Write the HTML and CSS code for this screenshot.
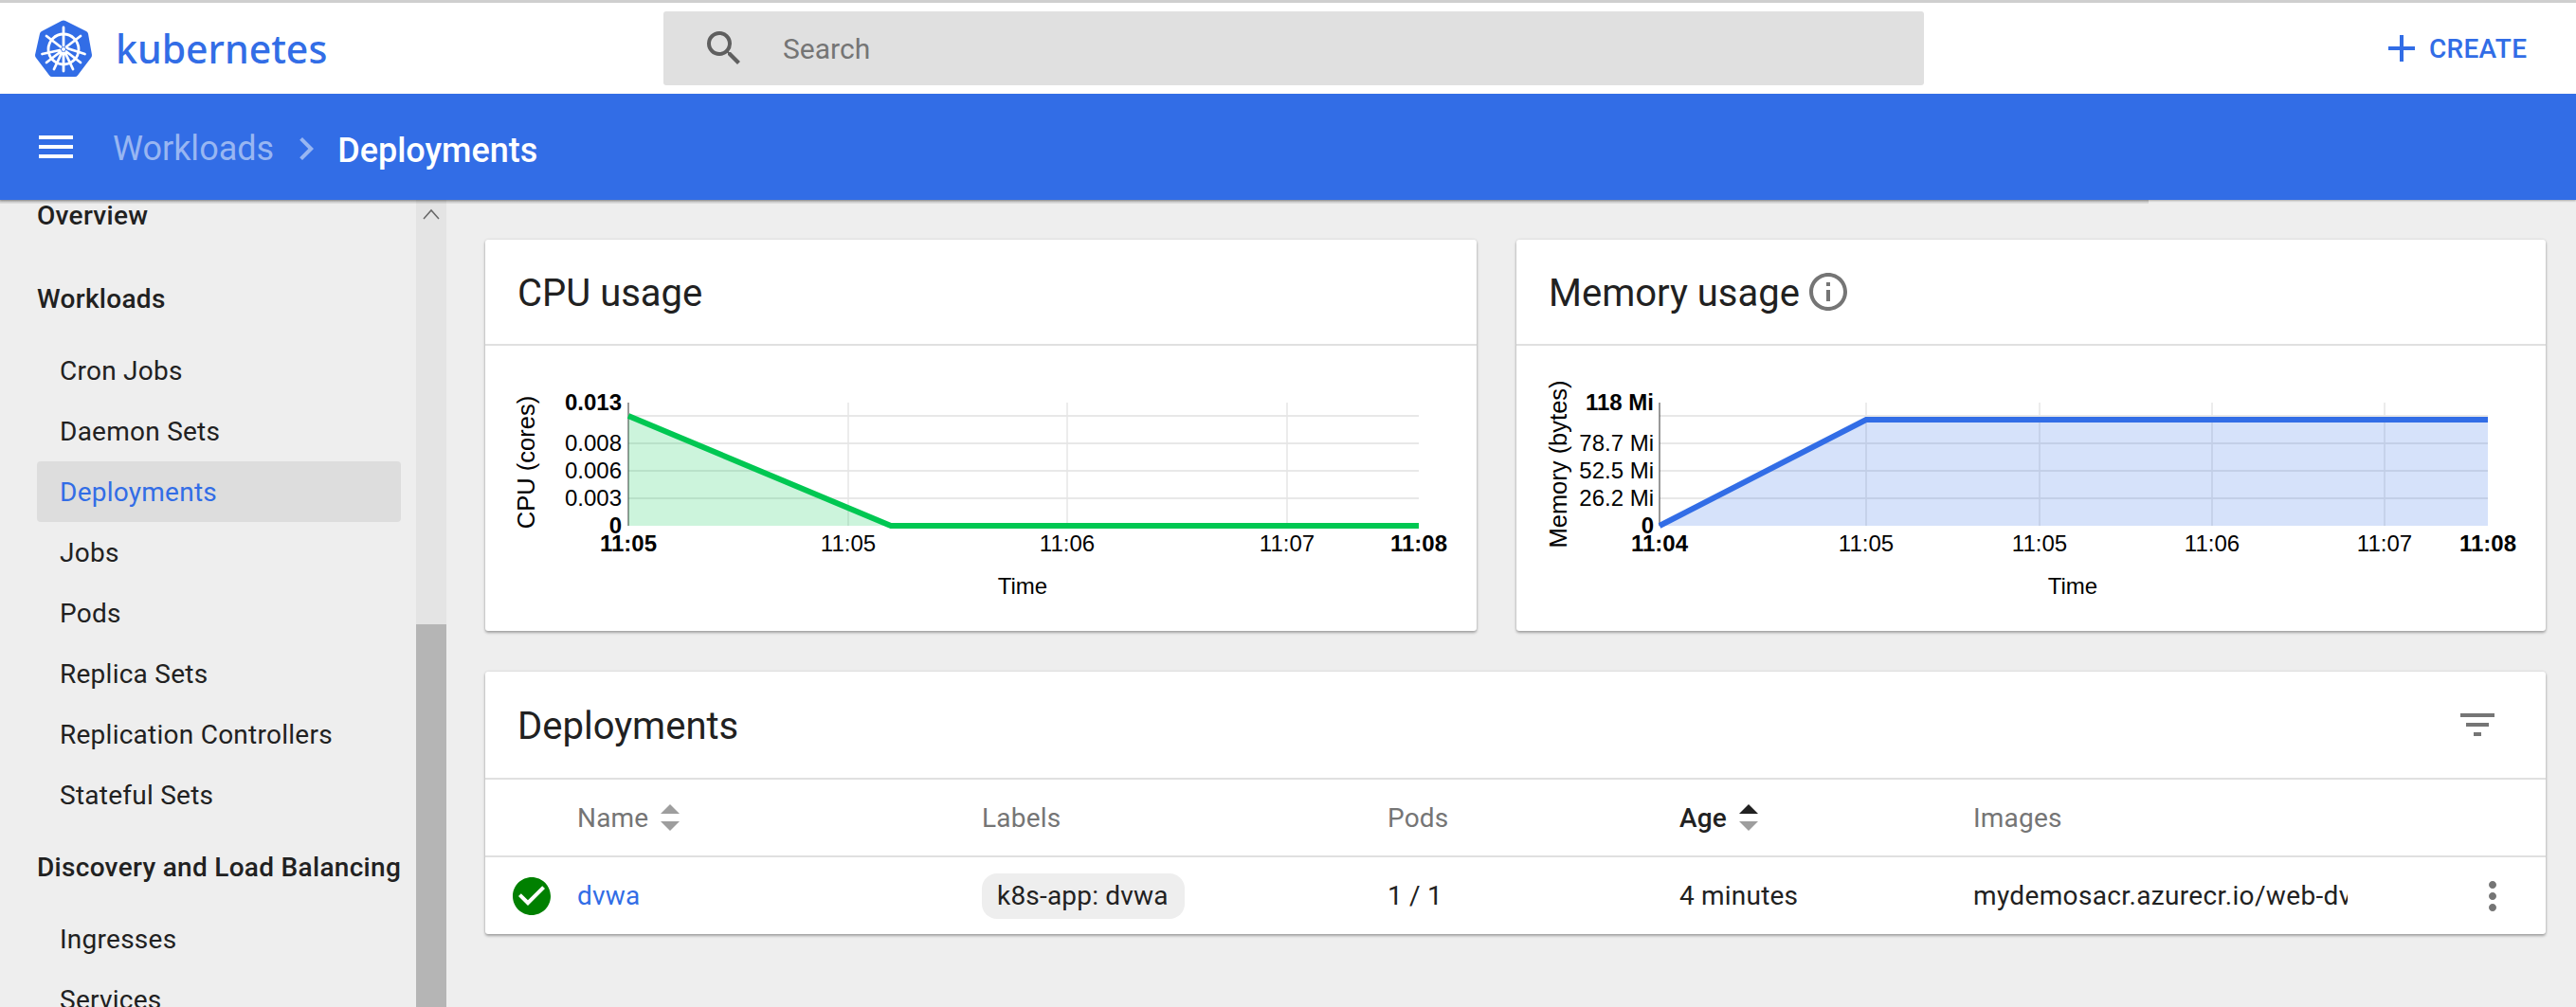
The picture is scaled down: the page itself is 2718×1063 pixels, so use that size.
FILE: index.html
```html
<!DOCTYPE html>
<html>
<head>
  <title>Deployments - Kubernetes Dashboard</title>
  <link rel="stylesheet" href="styles.css">
</head>
<body>
  <header class="top-bar">
    <div class="brand">
      <svg class="brand-logo" viewBox="0 0 60 60">
        <path class="logo-hept" d="M30 0.5 Q31 0.5 32 1 L54 12 Q55.500 12.800 56 14.500 L60 37 Q60 39 59 40 L45 58.500 Q44 60 42 60 L18 60 Q16 60 15 58.500 L1 40 Q0 39 0 37 L5 14.500 Q5.500 12.800 7 12 L28 1 Q29 0.500 30 0.500 Z"/>
        <g class="logo-wheel">
          <circle cx="30" cy="31" r="16"/>
          <circle cx="30" cy="31" r="2" class="logo-hub"/>
          <path d="M30 8 V27 M30 35 V54 M48 17 L33 28.500 M27 33.500 L12 45 M12 17 L27 28.500 M33 33.500 L48 45 M7.500 36 L26 32 M34 30 L52.500 36 M20 52 L28 35 M40 52 L32 35"/>
        </g>
      </svg>
      <span class="brand-name">kubernetes</span>
    </div>
    <div class="search-box">
      <svg class="icon search-icon" viewBox="0 0 24 24"><path d="M15.500 14h-.79l-.28-.27A6.471 6.471 0 0 0 16 9.500 6.500 6.500 0 1 0 9.500 16c1.610 0 3.090-.59 4.230-1.570l.27.28v.79l5 4.990L20.490 19l-4.990-5zm-6 0C7.010 14 5 11.990 5 9.500S7.010 5 9.500 5 14 7.010 14 9.500 11.990 14 9.500 14z"/></svg>
      <span class="search-text">Search</span>
    </div>
    <div class="create-btn">
      <svg class="icon" viewBox="0 0 24 24"><path d="M19 13h-6v6h-2v-6H5v-2h6V5h2v6h6v2z"/></svg>
      <span>CREATE</span>
    </div>
  </header>

  <div class="crumb-bar">
    <svg class="icon menu-icon" viewBox="0 0 24 24"><path d="M3 18h18v-2H3v2zm0-5h18v-2H3v2zm0-7v2h18V6H3z"/></svg>
    <span class="crumb-link">Workloads</span>
    <svg class="icon crumb-sep" viewBox="0 0 24 24"><path d="M10 6L8.590 7.410 13.170 12l-4.580 4.590L10 18l6-6z"/></svg>
    <span class="crumb-current">Deployments</span>
  </div>

  <div class="layout">
    <aside class="sidebar">
      <nav class="side-nav">
        <div class="nav-head">Overview</div>
        <div class="nav-head nav-group">Workloads</div>
        <div class="nav-list">
          <div class="nav-item">Cron Jobs</div>
          <div class="nav-item">Daemon Sets</div>
          <div class="nav-item selected">Deployments</div>
          <div class="nav-item">Jobs</div>
          <div class="nav-item">Pods</div>
          <div class="nav-item">Replica Sets</div>
          <div class="nav-item">Replication Controllers</div>
          <div class="nav-item">Stateful Sets</div>
        </div>
        <div class="nav-head nav-group-tight">Discovery and Load Balancing</div>
        <div class="nav-list">
          <div class="nav-item">Ingresses</div>
          <div class="nav-item">Services</div>
        </div>
      </nav>
      <div class="scrollbar">
        <svg class="scroll-arrow" viewBox="0 0 32 32"><path d="M8 20 L16 11 L24 20"/></svg>
        <div class="scroll-thumb"></div>
      </div>
    </aside>

    <main class="content">
      <div class="chart-row">
        <section class="card cpu-card">
          <div class="card-head"><h2>CPU usage</h2></div>
          <svg class="chart" viewBox="0 0 1046 301">
            <g class="grid-h">
              <line x1="151" x2="985" y1="74" y2="74"/>
              <line x1="151" x2="985" y1="103" y2="103"/>
              <line x1="151" x2="985" y1="132" y2="132"/>
              <line x1="151" x2="985" y1="161" y2="161"/>
            </g>
            <g class="grid-v">
              <line x1="383" x2="383" y1="60" y2="190"/>
              <line x1="614" x2="614" y1="60" y2="190"/>
              <line x1="846" x2="846" y1="60" y2="190"/>
            </g>
            <line class="axis" x1="151" x2="151" y1="60" y2="190"/>
            <path class="area-green" d="M151 74 L428 190 L151 190 Z"/>
            <path class="line-green" d="M151 74 L428 190 L985 190"/>
            <g class="tick tick-y">
              <text x="144" y="68" class="strong">0.013</text>
              <text x="144" y="111">0.008</text>
              <text x="144" y="140">0.006</text>
              <text x="144" y="169">0.003</text>
              <text x="144" y="198" class="strong">0</text>
            </g>
            <g class="tick tick-x">
              <text x="151" y="217" class="strong">11:05</text>
              <text x="383" y="217">11:05</text>
              <text x="614" y="217">11:06</text>
              <text x="846" y="217">11:07</text>
              <text x="985" y="217" class="strong">11:08</text>
            </g>
            <text class="tick tick-x" x="567" y="262">Time</text>
            <text class="axis-title" transform="translate(52 123) rotate(-90)">CPU (cores)</text>
          </svg>
        </section>

        <section class="card mem-card">
          <div class="card-head">
            <h2>Memory usage</h2>
            <svg class="icon info-icon" viewBox="0 0 24 24"><path d="M11 7h2v2h-2zm0 4h2v6h-2zm1-9C6.480 2 2 6.480 2 12s4.480 10 10 10 10-4.480 10-10S17.520 2 12 2zm0 18c-4.410 0-8-3.590-8-8s3.590-8 8-8 8 3.590 8 8-3.590 8-8 8z"/></svg>
          </div>
          <svg class="chart" viewBox="0 0 1086 301">
            <g class="grid-h">
              <line x1="151" x2="1025" y1="74" y2="74"/>
              <line x1="151" x2="1025" y1="103" y2="103"/>
              <line x1="151" x2="1025" y1="132" y2="132"/>
              <line x1="151" x2="1025" y1="161" y2="161"/>
            </g>
            <g class="grid-v">
              <line x1="369" x2="369" y1="60" y2="190"/>
              <line x1="552" x2="552" y1="60" y2="190"/>
              <line x1="734" x2="734" y1="60" y2="190"/>
              <line x1="916" x2="916" y1="60" y2="190"/>
            </g>
            <line class="axis" x1="151" x2="151" y1="60" y2="190"/>
            <path class="area-blue" d="M151 190 L369 78 L1025 78 L1025 190 Z"/>
            <path class="line-blue" d="M151 190 L369 78 L1025 78"/>
            <g class="tick tick-y">
              <text x="145" y="68" class="strong">118 Mi</text>
              <text x="145" y="111">78.7 Mi</text>
              <text x="145" y="140">52.5 Mi</text>
              <text x="145" y="169">26.2 Mi</text>
              <text x="145" y="198" class="strong">0</text>
            </g>
            <g class="tick tick-x">
              <text x="151" y="217" class="strong">11:04</text>
              <text x="369" y="217">11:05</text>
              <text x="552" y="217">11:05</text>
              <text x="734" y="217">11:06</text>
              <text x="916" y="217">11:07</text>
              <text x="1025" y="217" class="strong">11:08</text>
            </g>
            <text class="tick tick-x" x="587" y="262">Time</text>
            <text class="axis-title" transform="translate(53 125) rotate(-90)">Memory (bytes)</text>
          </svg>
        </section>
      </div>

      <section class="card table-card">
        <div class="card-head table-head">
          <h2>Deployments</h2>
          <svg class="icon filter-icon" viewBox="0 0 24 24"><path d="M10 18h4v-2h-4v2zM3 6v2h18V6H3zm3 7h12v-2H6v2z"/></svg>
        </div>
        <div class="table-row header-row">
          <div></div>
          <div class="col-title">Name
            <svg class="sort-icon" viewBox="0 0 20 28"><polygon class="sort-off" points="0,10 10,0 20,10"/><polygon class="sort-off" points="0,18 20,18 10,28"/></svg>
          </div>
          <div class="col-title">Labels</div>
          <div class="col-title">Pods</div>
          <div class="col-title active">Age
            <svg class="sort-icon" viewBox="0 0 20 28"><polygon class="sort-on" points="0,10 10,0 20,10"/><polygon class="sort-off" points="0,18 20,18 10,28"/></svg>
          </div>
          <div class="col-title">Images</div>
          <div></div>
        </div>
        <div class="table-row data-row">
          <div class="status-cell">
            <svg class="icon ok-icon" viewBox="0 0 24 24"><path d="M12 2C6.480 2 2 6.480 2 12s4.480 10 10 10 10-4.480 10-10S17.520 2 12 2zm-2 15l-5-5 1.410-1.410L10 14.170l7.590-7.590L19 8l-9 9z"/></svg>
          </div>
          <div><a class="name-link">dvwa</a></div>
          <div><span class="chip">k8s-app: dvwa</span></div>
          <div>1 / 1</div>
          <div>4 minutes</div>
          <div class="image-cell">mydemosacr.azurecr.io/web-dvwa:v1</div>
          <div class="action-cell">
            <svg class="icon more-icon" viewBox="0 0 24 24"><path d="M12 8c1.100 0 2-.9 2-2s-.9-2-2-2-2 .9-2 2 .9 2 2 2zm0 2c-1.100 0-2 .9-2 2s.9 2 2 2 2-.9 2-2-.9-2-2-2zm0 6c-1.100 0-2 .9-2 2s.9 2 2 2 2-.9 2-2-.9-2-2-2z"/></svg>
          </div>
        </div>
      </section>
    </main>
  </div>
</body>
</html>
```

FILE: styles.css
```css
* {
  box-sizing: border-box;
}

html,
body {
  margin: 0;
  height: 100%;
}

body {
  display: flex;
  flex-direction: column;
  overflow: hidden;
  background: #eeeeee;
  color: #212121;
  font-family: Roboto, "Liberation Sans", sans-serif;
  font-size: 28px;
}

.icon {
  width: 48px;
  height: 48px;
  flex: none;
  fill: currentColor;
}

/* Top bar */
.top-bar {
  display: flex;
  align-items: center;
  flex: none;
  height: 99px;
  border-top: 3px solid #cfcfcf;
  background: #fff;
}

.brand {
  display: flex;
  align-items: center;
  width: 700px;
  padding-left: 37px;
}

.brand-logo {
  width: 60px;
  height: 60px;
}

.logo-hept {
  fill: #326de6;
}

.logo-wheel {
  fill: none;
  stroke: #fff;
  stroke-width: 2.8;
  stroke-linecap: round;
}

.logo-hub {
  fill: #fff;
  stroke: none;
}

.brand-name {
  margin-left: 25px;
  color: #326de6;
  font-family: "Noto Sans", sans-serif;
  font-size: 41px;
  font-weight: 500;
}

.search-box {
  display: flex;
  align-items: center;
  width: 1330px;
  height: 78px;
  padding-left: 40px;
  border-radius: 3px;
  background: #e0e0e0;
}

.search-icon {
  color: #5f5f5f;
}

.search-text {
  margin-left: 38px;
  color: #757575;
  font-size: 30px;
}

.create-btn {
  display: flex;
  align-items: center;
  margin-left: 480px;
  color: #326de6;
  font-weight: 500;
  letter-spacing: 0.3px;
}

.create-btn span {
  margin-left: 5px;
}

/* Breadcrumbs */
.crumb-bar {
  display: flex;
  align-items: center;
  flex: none;
  position: relative;
  z-index: 2;
  height: 112px;
  padding-left: 35px;
  background: #326de6;
  box-shadow: 0 1px 2px rgba(0, 0, 0, 0.3);
  color: #fff;
}

/* darker part of the shadow, stops short of the right edge */
.crumb-bar::after {
  content: "";
  position: absolute;
  top: 100%;
  left: 0;
  width: 2267px;
  height: 4px;
  background: linear-gradient(rgba(0, 0, 0, 0.2), rgba(0, 0, 0, 0.06));
}

.crumb-link {
  margin-left: 36px;
  margin-top: 3px;
  color: #98b6f2;
  font-size: 36px;
}

.crumb-sep {
  margin-left: 10px;
  margin-top: 4px;
  color: #98b6f2;
}

.crumb-current {
  margin-left: 9px;
  margin-top: 8px;
  font-size: 36px;
  font-weight: 500;
}

/* Sidebar */
.layout {
  display: flex;
  flex: 1;
  min-height: 0;
}

.sidebar {
  display: flex;
  flex: none;
  width: 471px;
}

.side-nav {
  width: 439px;
  margin-top: -16px;
}

.nav-head {
  display: flex;
  align-items: center;
  height: 64px;
  padding-left: 39px;
  font-weight: 500;
  letter-spacing: 0.3px;
  white-space: nowrap;
}

.nav-group {
  margin-top: 24px;
}

.nav-group-tight {
  margin-top: 12px;
}

.nav-list {
  margin-top: 12px;
}

.nav-item {
  display: flex;
  align-items: center;
  width: 384px;
  height: 64px;
  margin-left: 39px;
  padding-left: 24px;
  border-radius: 4px;
  letter-spacing: 0.25px;
}

.nav-item.selected {
  background: #dddddd;
  color: #326de6;
}

.scrollbar {
  display: flex;
  flex-direction: column;
  width: 32px;
  background: #e4e4e4;
}

.scroll-arrow {
  flex: none;
  width: 32px;
  height: 32px;
  fill: none;
  stroke: #666;
  stroke-width: 1.500;
}

.scroll-thumb {
  flex: 1;
  margin-top: 416px;
  background: #b5b5b5;
}

/* Main */
.content {
  flex: 1;
  min-width: 0;
  padding: 42px 32px 0 41px;
}

.chart-row {
  display: grid;
  grid-template-columns: 1046px 1086px;
  gap: 42px;
  margin-bottom: 43px;
}

.card {
  border-radius: 3px;
  background: #fff;
  box-shadow: 0 2px 3px rgba(0, 0, 0, 0.3), 0 0 3px rgba(0, 0, 0, 0.12);
}

.card-head {
  display: flex;
  align-items: center;
  height: 112px;
  padding-left: 34px;
  border-bottom: 2px solid #e0e0e0;
}

.card-head h2 {
  margin: 2px 0 0;
  font-size: 40px;
  font-weight: 400;
}

.info-icon {
  margin-left: 6px;
  color: #757575;
}

.chart {
  display: block;
  width: 100%;
  height: 301px;
  font-family: "Liberation Sans", Arial, sans-serif;
}

.grid-h line {
  stroke: #e8e8e8;
  stroke-width: 2;
}

.grid-v line {
  stroke: #e6e6e6;
  stroke-width: 1.500;
}

.axis {
  stroke: #333;
  stroke-width: 1;
}

.area-green {
  fill: #00c752;
  fill-opacity: 0.2;
}

.line-green {
  fill: none;
  stroke: #00c752;
  stroke-width: 6;
}

.area-blue {
  fill: #326de6;
  fill-opacity: 0.2;
}

.line-blue {
  fill: none;
  stroke: #326de6;
  stroke-width: 6;
}

.tick {
  fill: #000;
  font-size: 24px;
}

.tick-y {
  text-anchor: end;
}

.tick-x {
  text-anchor: middle;
}

.strong {
  font-weight: 700;
}

.axis-title {
  fill: #000;
  font-size: 25.500px;
  text-anchor: middle;
}

/* Table */
.table-head {
  justify-content: space-between;
  height: 114px;
  padding-right: 48px;
}

.filter-icon {
  color: #757575;
}

.table-row {
  display: grid;
  grid-template-columns: 97px 427px 428px 308px 310px 395px 1fr;
  align-items: center;
  height: 82px;
  letter-spacing: 0.2px;
}

.header-row {
  border-bottom: 2px solid #e0e0e0;
}

.data-row {
  height: 81px;
}

.col-title {
  display: flex;
  align-items: center;
  color: #757575;
}

.col-title.active {
  color: #212121;
  font-weight: 500;
}

.sort-icon {
  width: 20px;
  height: 28px;
  margin-left: 13px;
}

.sort-off {
  fill: #9e9e9e;
}

.sort-on {
  fill: #212121;
}

.status-cell {
  padding-left: 25px;
  display: flex;
}

.ok-icon {
  color: #008000;
}

.name-link {
  color: #326de6;
}

.chip {
  display: inline-block;
  height: 48px;
  padding: 0 17px 0 16px;
  border-radius: 16px;
  background: #eeeeee;
  line-height: 48px;
}

.image-cell {
  overflow: hidden;
  white-space: nowrap;
  letter-spacing: 0.35px;
}

.action-cell {
  display: flex;
  justify-content: flex-end;
  padding-right: 32px;
}

.more-icon {
  color: #757575;
}
```
